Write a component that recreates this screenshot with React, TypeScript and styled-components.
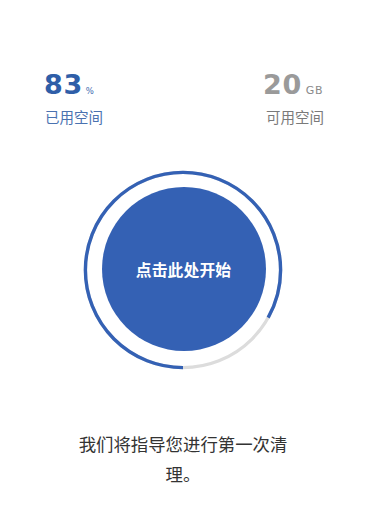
import React from "react";
import styled, { createGlobalStyle } from "styled-components";

const Global = createGlobalStyle`
  html, body { margin: 0; padding: 0; background: #ffffff; }
  body { font-family: Roboto, "Noto Sans CJK SC", sans-serif; }
`;

const Page = styled.div`
  width: 366px;
  height: 523px;
  display: flex;
  flex-direction: column;
  align-items: center;
  background: #ffffff;
  overflow: hidden;
`;

const StatsRow = styled.div`
  align-self: stretch;
  display: flex;
  justify-content: space-between;
  padding: 70px 42px 0 44px;
`;

const Stat = styled.div`
  display: flex;
  flex-direction: column;
  align-items: flex-start;
`;

const ValueLine = styled.div`
  display: flex;
  align-items: baseline;
  height: 30px;
  line-height: 30px;
`;

const Value = styled.span<{ $color: string }>`
  font-family: "DejaVu Sans", "Liberation Sans", sans-serif;
  font-weight: 700;
  font-size: 27px;
  letter-spacing: 0.6px;
  color: ${(p) => p.$color};
`;

const Unit = styled.span<{ $color: string; $size: number; $gap: number }>`
  font-family: "DejaVu Sans", "Liberation Sans", sans-serif;
  font-size: ${(p) => p.$size}px;
  letter-spacing: 0.6px;
  margin-left: ${(p) => p.$gap}px;
  color: ${(p) => p.$color};
`;

const Label = styled.div<{ $color: string; $indent: number }>`
  margin-top: 7px;
  margin-left: ${(p) => p.$indent}px;
  font-family: "Noto Sans CJK SC", sans-serif;
  font-size: 14.5px;
  line-height: 20px;
  color: ${(p) => p.$color};
`;

const RingStack = styled.div`
  margin-top: 42px;
  width: 202px;
  height: 202px;
  display: grid;
  place-items: center;
  & > * { grid-area: 1 / 1; }
`;

const StartButton = styled.button`
  width: 164px;
  height: 164px;
  border-radius: 50%;
  border: none;
  padding: 0;
  margin: 0 0 2px 1px;
  background: #3461b4;
  color: #ffffff;
  font-family: "Noto Sans CJK SC", sans-serif;
  font-weight: 700;
  font-size: 15.8px;
  letter-spacing: 0.1px;
  cursor: pointer;
`;

const Hint = styled.p`
  margin: 58px 0 0 0;
  width: 216px;
  text-align: center;
  font-family: "Noto Sans CJK SC", sans-serif;
  font-size: 17.4px;
  line-height: 30px;
  color: #333333;
`;

const R = 97.6;
const C = 2 * Math.PI * R;
const percent = 83;

function Ring() {
  const dash = (C * percent) / 100;
  return (
    <svg width="202" height="202" viewBox="0 0 202 202">
      <circle cx="101" cy="101" r={R} fill="none" stroke="#dcdcdc" strokeWidth="3.2" />
      <circle
        cx="101"
        cy="101"
        r={R}
        fill="none"
        stroke="#3461b4"
        strokeWidth="3.4"
        strokeDasharray={`${dash} ${C}`}
        transform="rotate(90 101 101)"
      />
    </svg>
  );
}

export default function App() {
  return (
    <>
      <Global />
      <Page>
        <StatsRow>
          <Stat>
            <ValueLine>
              <Value $color="#2f5ea8">83</Value>
              <Unit $color="#3f6db0" $size={8.5} $gap={3}>%</Unit>
            </ValueLine>
            <Label $color="#4a72b0" $indent={1}>已用空间</Label>
          </Stat>
          <Stat>
            <ValueLine>
              <Value $color="#9a9a9a">20</Value>
              <Unit $color="#8a8a8a" $size={11} $gap={4}>GB</Unit>
            </ValueLine>
            <Label $color="#7a7a7a" $indent={3}>可用空间</Label>
          </Stat>
        </StatsRow>
        <RingStack>
          <Ring />
          <StartButton>点击此处开始</StartButton>
        </RingStack>
        <Hint>我们将指导您进行第一次清理。</Hint>
      </Page>
    </>
  );
}
